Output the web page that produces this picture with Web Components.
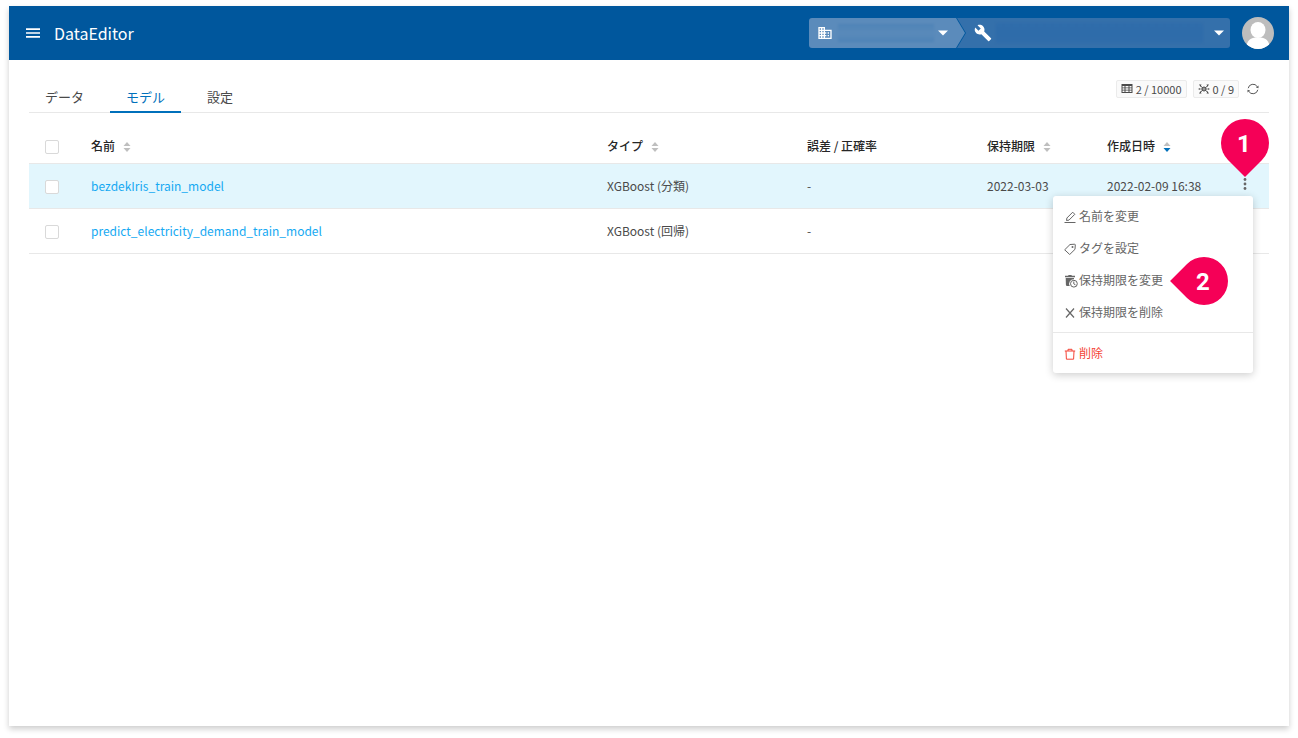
<!DOCTYPE html>
<html lang="ja">
<head>
<meta charset="utf-8">
<meta name="viewport" content="width=device-width, initial-scale=1">
<title>DataEditor</title>
<style>
  body { margin: 0; background: #fff; color: #4a4a4a; font: 12px/18px "Noto Sans CJK JP", sans-serif; }
</style>
</head>
<body>
<de-app>
  <de-header slot="header">DataEditor</de-header>
  <de-toolbar slot="toolbar"></de-toolbar>
  <de-models></de-models>
</de-app>

<script>
const ICONS = {
  menu: [16, '<path d="M1 3.300h14v1.600H1zM1 7.200h14v1.600H1zM1 11.100h14v1.600H1z"/>'],
  domain: [24, '<path d="M12 7V3H2v18h20V7H12zM6 19H4v-2h2v2zm0-4H4v-2h2v2zm0-4H4V9h2v2zm0-4H4V5h2v2zm4 12H8v-2h2v2zm0-4H8v-2h2v2zm0-4H8V9h2v2zm0-4H8V5h2v2zm10 12h-8v-2h2v-2h-2v-2h2v-2h-2V9h8v10zm-2-8h-2v2h2v-2zm0 4h-2v2h2v-2z"/>'],
  wrench: [24, '<path d="M22.7 19l-9.1-9.1c.9-2.3.4-5-1.5-6.9-2-2-5-2.400-7.400-1.300L9 6 6 9 1.600 4.700C.4 7.100.9 10.100 2.900 12.100c1.900 1.900 4.600 2.400 6.900 1.500l9.100 9.100c.4.4 1 .4 1.400 0l2.300-2.300c.5-.4.5-1.100.1-1.400z"/>'],
  caret: [10, '<path d="M0 2.500h10L5 7.500z"/>'],
  grid: [12, '<path fill-rule="evenodd" d="M.5 1h11v9H.500zM1.500 3v1.400h2V3zm3 0v1.400h3V3zm4 0v1.400h2V3zm-7 2.300v1.400h2V5.300zm3 0v1.400h3V5.300zm4 0v1.400h2V5.300zM1.500 7.600v1.500h2V7.600zm3 0v1.500h3V7.600zm4 0v1.500h2V7.600z"/>'],
  network: [12, '<g stroke="currentColor" fill="none"><path d="M2 2.500l8 7M10 2.500l-8 7"/><path stroke-width=".6" d="M1 6h10"/><circle cx="6" cy="6" r="2" fill="#999"/></g><path d="M1 1.500h2.500L2.500 3.700zM11 1.500H8.500l1 2.200zM1 10.500h2.500L2.500 8.300zM11 10.500H8.500l1-2.200z"/><circle cx="1.200" cy="6" r=".7"/><circle cx="10.800" cy="6" r=".7"/>'],
  refresh: [12, '<g fill="none" stroke="currentColor"><path d="M1.200 5.200A4.900 4.900 0 0 1 10.200 3.600M10.800 6.800A4.900 4.900 0 0 1 1.800 8.400"/></g><path d="M11.500 2.600v2.700L8.900 4.400zM.5 9.400V6.700l2.600.9z"/>'],
  sort: [8, '<path class="up" d="M4 0l3.500 4h-7z"/><path class="down" d="M.5 6h7L4 10z"/>', 10],
  more: [12, '<circle cx="6" cy="1.500" r="1.400"/><circle cx="6" cy="6" r="1.400"/><circle cx="6" cy="10.500" r="1.400"/>'],
  edit: [12, '<path fill="none" stroke="currentColor" d="M.5 11.500h11M2.500 9.500l.4-2.500L8.700 1.200l2.100 2.100L5 9.100z"/>'],
  tag: [12, '<path fill="none" stroke="currentColor" stroke-linejoin="round" d="M.7 6.800L6 1.500l4.800-.3.500.500-.3 4.600-5.300 5.200z"/><circle cx="8.500" cy="3.900" r="1"/>'],
  expire: [14, '<path d="M1 1.800h3l.7-.8h2.600l.7.800h3v1.400H1z"/><path d="M1.700 4h8.300v1.200A4.500 4.500 0 0 0 5.800 12H3.200q-1.300 0-1.300-1.200z"/><path fill="none" stroke="currentColor" d="M13.300 9.700a3.400 3.400 0 1 1-6.800 0 3.400 3.400 0 0 1 6.800 0M9.800 7.500v2.400l1.700 1"/>'],
  close: [12, '<path fill="none" stroke="currentColor" stroke-width="1.200" d="M2 1.500l8 9M10 1.500l-8 9"/>'],
  trash: [12, '<path fill="none" stroke="currentColor" d="M.8 3h10.400M4 3V1.300h4V3M2 3l.4 8.200h7.200L10 3"/>']
};

function define(name, html, setup) {
  const template = document.createElement('template');
  template.innerHTML = html;
  customElements.define(name, class extends HTMLElement {
    connectedCallback() {
      if (this.shadowRoot) return;
      this.attachShadow({ mode: 'open' }).append(template.content.cloneNode(true));
      if (setup) setup(this, this.shadowRoot);
    }
  });
}

define('de-icon', `
  <style>
    :host { display: inline-block; flex: none; width: 12px; height: 12px; }
    svg { display: block; width: 100%; height: 100%; fill: currentColor; }
    .down { fill: var(--sort-down, currentColor); }
  </style>`, (host, root) => {
  const [w, body, h = w] = ICONS[host.getAttribute('name')];
  root.innerHTML += `<svg viewBox="0 0 ${w} ${h}" aria-hidden="true">${body}</svg>`;
});

define('de-app', `
  <style>
    :host { display: flex; flex-direction: column; box-sizing: border-box; min-height: 100vh; padding: 6px 9px 12px; }
    .sheet { flex: 1; background: #fff; box-shadow: 0 3px 6px rgba(0,0,0,.2); }
    main { padding: 0 20px 20px; }
  </style>
  <div class="sheet">
    <slot name="header"></slot>
    <main><slot name="toolbar"></slot><slot></slot></main>
  </div>`);

define('de-header', `
  <style>
    :host { display: block; }
    header { display: flex; align-items: center; height: 54px; padding: 0 15px 0 16px; background: #00579d; color: #fff; }
    button { border: 0; padding: 0; background: none; color: inherit; display: flex; }
    .menu { margin-right: 13px; }
    .menu de-icon { width: 16px; height: 16px; }
    h1 { flex: 1; margin: 0; font-size: 16px; line-height: 24px; font-weight: 400; }
    nav { display: flex; flex: 0 1 421px; margin-right: 12px; }
    de-scope { flex: 1; }
    de-scope:first-child { flex: 0 0 156px; margin-right: -8px; }
    .avatar { width: 32px; height: 32px; border-radius: 50%; overflow: hidden; }
  </style>
  <header>
    <button class="menu" aria-label="メニュー"><de-icon name="menu"></de-icon></button>
    <h1><slot></slot></h1>
    <nav>
      <de-scope kind="org" label="組織"><de-icon name="domain"></de-icon></de-scope>
      <de-scope kind="project" label="プロジェクト"><de-icon name="wrench"></de-icon></de-scope>
    </nav>
    <button class="avatar" aria-label="アカウント">
      <svg width="32" height="32" viewBox="0 0 32 32" aria-hidden="true"><rect width="32" height="32" fill="#bdbdbd"/><g fill="#fff"><ellipse cx="16" cy="13" rx="7.500" ry="8"/><path d="M4.500 28.500C6 22 10 20.500 16 20.500s10 1.500 11.500 8L16 34z"/></g></svg>
    </button>
  </header>`);

define('de-scope', `
  <style>
    :host { display: block; min-width: 0; }
    label { position: relative; display: flex; align-items: center; height: 30px; box-sizing: border-box; }
    :host([kind=org]) label { padding: 0 17px 0 8px; background: #5b8bbb; border-radius: 3px 0 0 3px; clip-path: polygon(0 0, 147px 0, 100% 50%, 147px 100%, 0 100%); }
    :host([kind=project]) label { padding: 0 6px 0 17px; background: #3470ab; border-radius: 0 3px 3px 0; clip-path: polygon(0 0, 100% 0, 100% 100%, 0 100%, 9px 50%); }
    ::slotted(de-icon) { width: 16px; height: 16px; margin-right: 5px; }
    :host([kind=project]) ::slotted(de-icon) { width: 18px; height: 18px; margin-right: 4px; }
    .mask { flex: 1; height: 18px; margin-right: 4px; background: linear-gradient(#4f84b7, #5a8aba, #4f84b7); filter: blur(1px); }
    :host([kind=project]) .mask { height: 20px; margin-right: 11px; background: linear-gradient(#306dab, #2e6caa, #306dab); }
    select { position: absolute; inset: 0; width: 100%; border: 0; background: none; appearance: none; color: inherit; font: inherit; }
    .caret { width: 10px; height: 10px; }
  </style>
  <label><slot></slot><span class="mask"></span><de-icon class="caret" name="caret"></de-icon><select><option></option></select></label>`,
  (host, root) => root.querySelector('select').setAttribute('aria-label', host.getAttribute('label')));

define('de-toolbar', `
  <style>
    :host { display: flex; justify-content: space-between; height: 52px; border-bottom: 1px solid #e8e8e8; }
    nav { display: flex; gap: 10px; align-items: flex-end; margin-bottom: -1px; }
    a { padding: 0 16px 4px; border-bottom: 2px solid transparent; color: #4a4a4a; font-size: 13px; line-height: 20px; text-decoration: none; }
    a[aria-current] { color: #0070bb; border-color: #0070bb; }
    .usage { display: flex; gap: 6px; align-items: flex-start; padding: 20px 10px 0 0; font-size: 11px; }
    .usage span { display: flex; align-items: center; gap: 3px; box-sizing: border-box; height: 18px; padding: 0 4px; border: 1px solid #ebebeb; border-radius: 2px; background: #fafafa; }
    button { display: flex; margin: 3px 0 0 2px; padding: 0; border: 0; background: none; color: #595959; }
  </style>
  <nav><a href="#data">データ</a><a href="#model" aria-current="page">モデル</a><a href="#settings">設定</a></nav>
  <div class="usage">
    <span><de-icon name="grid"></de-icon>2 / 10000</span>
    <span><de-icon name="network"></de-icon>0 / 9</span>
    <button aria-label="更新"><de-icon name="refresh"></de-icon></button>
  </div>`);

define('de-models', `
  <style>
    :host { display: block; padding-top: 17px; }
    table { width: 100%; table-layout: fixed; border-collapse: separate; border-spacing: 0; }
    th, td { box-sizing: border-box; height: 45px; padding: 0 16px; border-bottom: 1px solid #e8e8e8; text-align: left; white-space: nowrap; }
    td:first-child { padding-top: 1px; }
    th { height: 34px; padding: 0 16px 1px; color: #262626; font-weight: 500; }
    th:first-child { padding-bottom: 0; }
    .check { width: 46px; } .type { width: 200px; } .score { width: 180px; } .keep { width: 120px; } .made { width: 130px; } .act { width: 48px; }
    .on td { background: #e2f6fd; }
    input { display: block; appearance: none; box-sizing: border-box; width: 14px; height: 14px; margin: 0; border: 1px solid #d9d9d9; border-radius: 2px; background: #fff; }
    a { color: #15a9f2; text-decoration: none; }
    .sort { display: inline-flex; align-items: center; gap: 8px; padding: 0; border: 0; background: none; color: inherit; font: inherit; }
    .sort de-icon { width: 8px; height: 10px; margin-top: 2px; color: #bfbfbf; }
    .sort.desc { --sort-down: #0070bb; }
    td.menu { position: relative; padding: 0; }
    .more { display: flex; margin: 0 auto 4px; padding: 0; border: 0; background: none; color: #666; }
    de-menu { position: absolute; z-index: 1; top: 32px; right: 16px; }
    .one { position: absolute; z-index: 2; right: 0; bottom: 41px; }
    .two { position: absolute; z-index: 2; right: 41px; top: 93px; }
  </style>
  <table>
    <colgroup><col class="check"><col><col class="type"><col class="score"><col class="keep"><col class="made"><col class="act"></colgroup>
    <thead><tr>
      <th><input type="checkbox" aria-label="すべて選択"></th>
      <th><button class="sort">名前<de-icon name="sort"></de-icon></button></th>
      <th><button class="sort">タイプ<de-icon name="sort"></de-icon></button></th>
      <th>誤差 / 正確率</th>
      <th><button class="sort">保持期限<de-icon name="sort"></de-icon></button></th>
      <th><button class="sort desc">作成日時<de-icon name="sort"></de-icon></button></th>
      <th></th>
    </tr></thead>
    <tbody>
      <tr class="on">
        <td><input type="checkbox" aria-label="bezdekIris_train_model"></td>
        <td><a href="#bezdekIris">bezdekIris_train_model</a></td>
        <td>XGBoost (分類)</td><td>-</td><td>2022-03-03</td><td>2022-02-09 16:38</td>
        <td class="menu">
          <button class="more" aria-label="操作"><de-icon name="more"></de-icon></button>
          <de-menu></de-menu>
          <de-pin class="one">1</de-pin>
          <de-pin class="two" side="left">2</de-pin>
        </td>
      </tr>
      <tr>
        <td><input type="checkbox" aria-label="predict_electricity_demand_train_model"></td>
        <td><a href="#predict">predict_electricity_demand_train_model</a></td>
        <td>XGBoost (回帰)</td><td>-</td><td></td><td></td><td></td>
      </tr>
    </tbody>
  </table>`);

define('de-menu', `
  <style>
    :host { display: block; width: 200px; box-sizing: border-box; padding: 4px 0; border-radius: 3px; background: #fff; box-shadow: 0 2px 8px rgba(0,0,0,.2); color: #666; }
    button { display: flex; align-items: center; gap: 3px; width: 100%; height: 32px; padding: 0 11px; border: 0; background: none; color: inherit; font: inherit; }
    de-icon { margin-top: 2px; }
    .wide { width: 14px; height: 14px; margin-right: -2px; }
    hr { height: 1px; margin: 4px 0; border: 0; background: #e8e8e8; }
    .danger { color: #f44336; }
  </style>
  <button><de-icon name="edit"></de-icon>名前を変更</button>
  <button><de-icon name="tag"></de-icon>タグを設定</button>
  <button><de-icon class="wide" name="expire"></de-icon>保持期限を変更</button>
  <button><de-icon name="close"></de-icon>保持期限を削除</button>
  <hr>
  <button class="danger"><de-icon name="trash"></de-icon>削除</button>`);

define('de-pin', `
  <style>
    :host { display: grid; place-items: center; isolation: isolate; box-sizing: border-box; width: 48px; height: 48px; padding: 2px 2px 0 0; color: #fff; font: 700 24px/28px Roboto, sans-serif; }
    :host::before { content: ""; position: absolute; z-index: -1; inset: 0; border-radius: 50% 50% 0 50%; background: #f50057; transform: rotate(45deg); }
    :host([side=left])::before { transform: rotate(135deg); }
  </style>
  <slot></slot>`);
</script>
</body>
</html>
